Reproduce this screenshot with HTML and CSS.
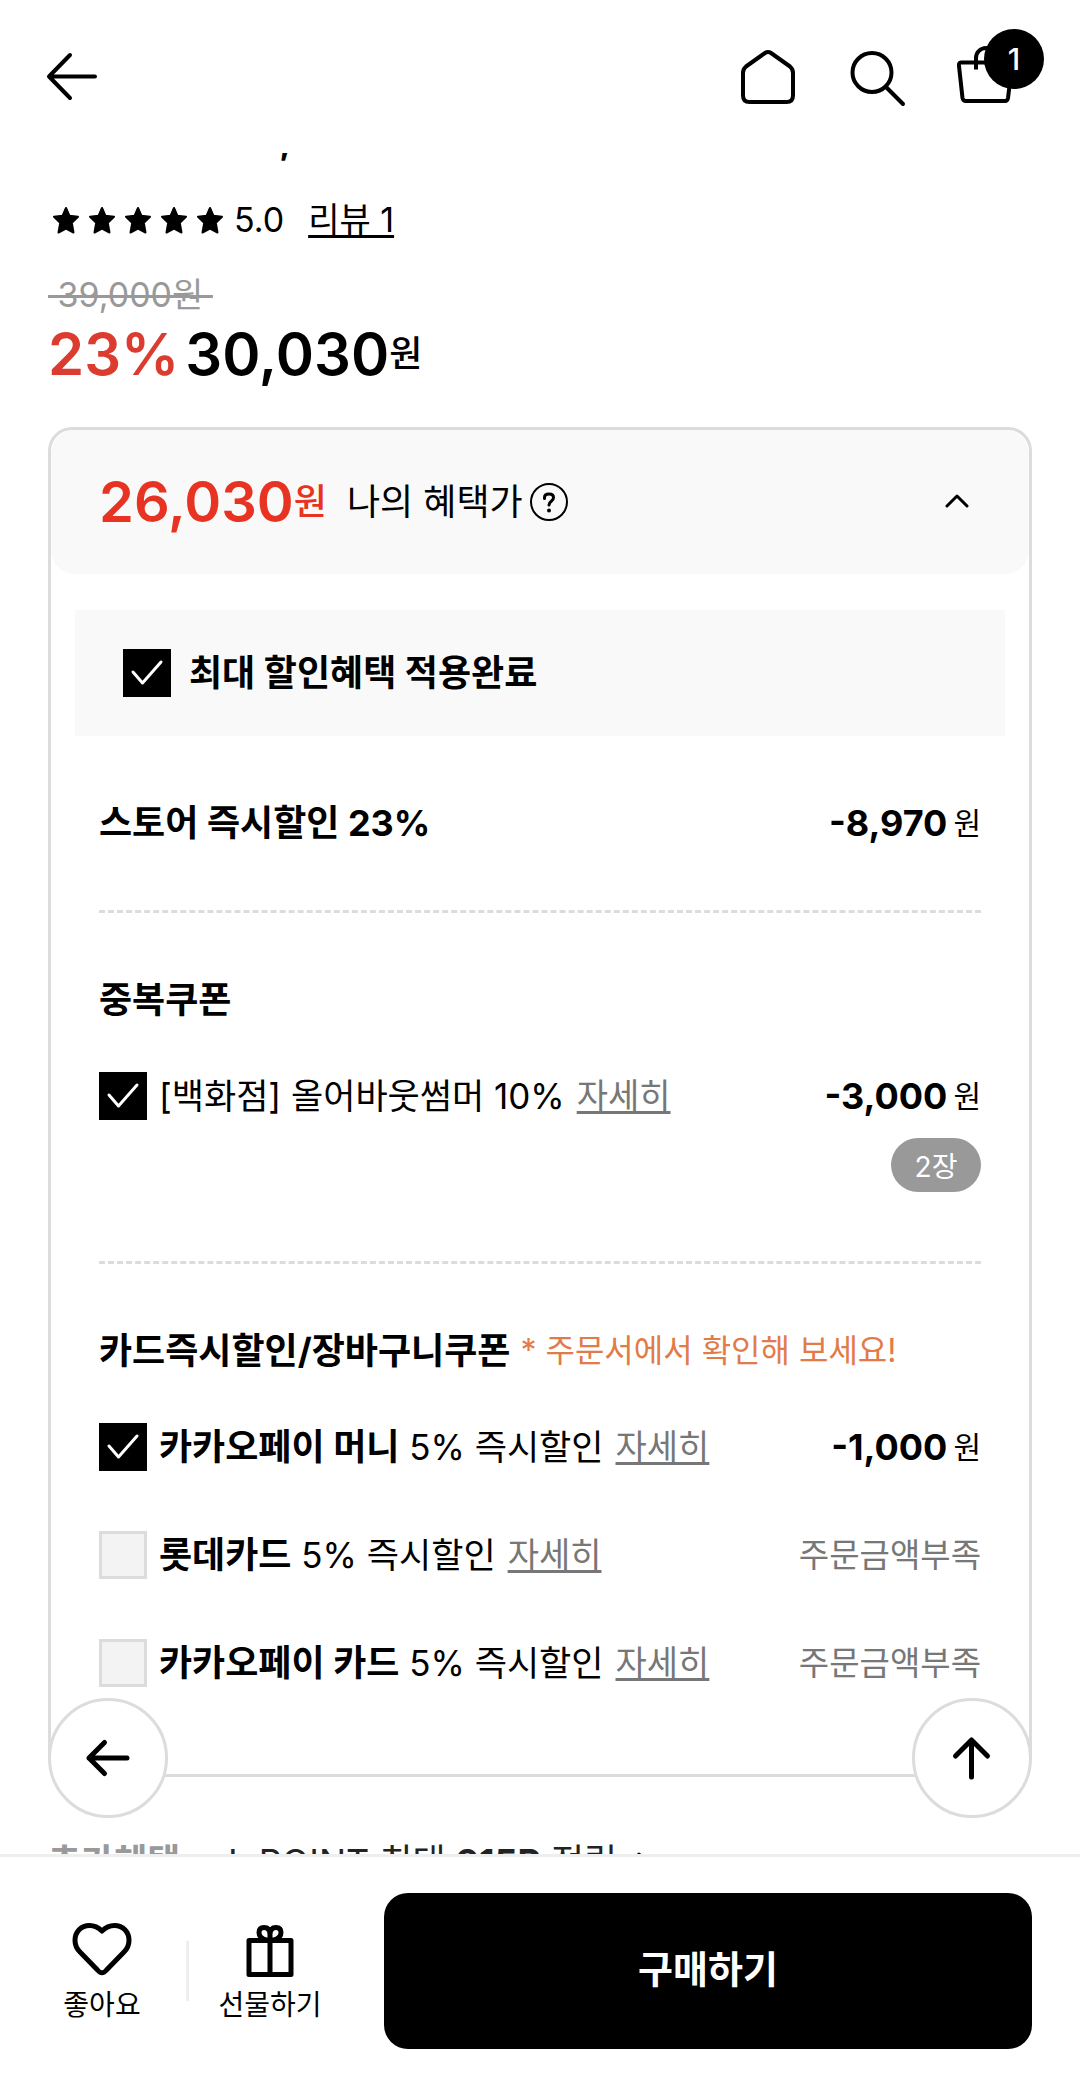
FILE: index.html
```html
<!DOCTYPE html>
<html lang="ko">
<head>
<meta charset="utf-8">
<meta name="viewport" content="width=device-width, initial-scale=1">
<title>상품 상세</title>
<link rel="stylesheet" href="styles.css">
</head>
<body>
<header class="topbar">
  <button class="icon-btn" type="button" aria-label="뒤로">
    <svg viewBox="0 0 64 64"><path d="M55 31.5H9M30 10 9 31.5 30 53"/></svg>
  </button>
  <nav class="topbar-nav">
    <a class="icon-btn" href="#" aria-label="홈">
      <svg viewBox="0 0 64 64"><path d="M29 8 10 21.500Q7 24 7 28V50.500Q7 57 13.500 57H50.500Q57 57 57 50.500V28Q57 24 54 21.500L35 8Q32 6 29 8Z"/></svg>
    </a>
    <a class="icon-btn" href="#" aria-label="검색">
      <svg viewBox="-2 0 64 64"><circle cx="26" cy="27.500" r="19.500"/><path d="M40 42 57 59"/></svg>
    </a>
    <a class="icon-btn" href="#" aria-label="장바구니">
      <svg viewBox="1 0 64 64"><path d="M10 17.500H58Q61.500 17.500 61 21L57 53Q56.500 56 54 56H15Q12 56 11.500 53L8 21Q7.500 17.500 10 17.500Z"/><path stroke-linecap="butt" d="M25 24.500V13A10 10 0 0 1 45 13V24.500"/></svg>
      <span class="cart-count">1</span>
    </a>
  </nav>
</header>

<main class="content">
  <p class="product-title">,</p>
  <div class="rating">
    <span class="stars" role="img" aria-label="별점 5점">
      <svg viewBox="0 0 36 36"><use href="#star"/></svg><svg viewBox="0 0 36 36"><use href="#star"/></svg><svg viewBox="0 0 36 36"><use href="#star"/></svg><svg viewBox="0 0 36 36"><use href="#star"/></svg><svg viewBox="0 0 36 36"><use href="#star"/></svg>
    </span>
    <span class="score">5.0</span>
    <a class="reviews" href="#">리뷰 1</a>
  </div>
  <del class="list-price">&nbsp;39,000원&nbsp;</del>
  <p class="sale-price"><span class="rate">23%</span><strong>30,030</strong><span class="won">원</span></p>

  <section class="benefit">
    <div class="benefit-head">
      <strong class="my-price">26,030</strong><span class="won my-won">원</span>
      <span class="my-label">나의 혜택가</span>
      <button class="help-btn" type="button" aria-label="혜택가 안내">
        <svg viewBox="0 0 40 40"><circle cx="20" cy="20" r="18"/><path stroke-width="3" d="M15.500 16.500V15.500Q15.500 12 20 12T24.500 15.500Q24.500 17.500 22.500 19T20 23"/><circle class="dot" cx="20" cy="28.500" r="2"/></svg>
      </button>
      <button class="fold-btn" type="button" aria-label="접기">
        <svg viewBox="0 0 24 24"><path d="M2 16 12 6 22 16"/></svg>
      </button>
    </div>

    <label class="max-benefit">
      <input class="check" type="checkbox" checked>
      <span class="strong">최대 할인혜택 적용완료</span>
    </label>

    <div class="group">
      <div class="row">
        <h2 class="group-title">스토어 즉시할인 23%</h2>
        <p class="amount"><strong>-8,970</strong>원</p>
      </div>
    </div>

    <div class="group group-stack">
      <h2 class="group-title">중복쿠폰</h2>
      <div class="row">
        <input class="check" type="checkbox" id="coupon" checked>
        <label class="name" for="coupon">[백화점] 올어바웃썸머 10%</label>
        <a class="detail" href="#">자세히</a>
        <p class="amount"><strong>-3,000</strong>원</p>
      </div>
      <button class="sheets" type="button">2장</button>
    </div>

    <div class="group group-cards">
      <div class="title-line">
        <h2 class="group-title">카드즉시할인/장바구니쿠폰</h2>
        <span class="notice">* 주문서에서 확인해 보세요!</span>
      </div>
      <div class="row">
        <input class="check" type="checkbox" id="money" checked>
        <label class="name" for="money"><b>카카오페이 머니</b> 5% 즉시할인</label>
        <a class="detail" href="#">자세히</a>
        <p class="amount"><strong>-1,000</strong>원</p>
      </div>
      <div class="row">
        <input class="check" type="checkbox" id="lotte" disabled>
        <label class="name" for="lotte"><b>롯데카드</b> 5% 즉시할인</label>
        <a class="detail" href="#">자세히</a>
        <span class="lack">주문금액부족</span>
      </div>
      <div class="row">
        <input class="check" type="checkbox" id="kakao" disabled>
        <label class="name" for="kakao"><b>카카오페이 카드</b> 5% 즉시할인</label>
        <a class="detail" href="#">자세히</a>
        <span class="lack">주문금액부족</span>
      </div>
    </div>
  </section>

  <div class="extra">
    <span class="extra-label">추가혜택</span>
    <span class="extra-text">L.POINT 최대 <b>315P</b> 적립</span>
    <svg viewBox="0 0 24 24"><path d="M6 10 12 4 18 10"/></svg>
  </div>

  <button class="float-btn float-back" type="button" aria-label="이전">
    <svg viewBox="0 0 64 64"><path d="M51 32H13M28.500 16.500 13 32 28.500 47.500"/></svg>
  </button>
  <button class="float-btn float-top" type="button" aria-label="맨 위로">
    <svg viewBox="0 0 64 64"><path d="M31.500 51V14M15.500 30 31.500 14 47.500 30"/></svg>
  </button>
</main>

<footer class="buybar">
  <button class="tool like" type="button">
    <svg viewBox="0 0 60 60"><path d="M30 10C26 6 22 4.500 17.500 4.500C9 4.500 3 11 3 19.500C3 24 5 28 8 31L25.500 49Q30 54.500 34.500 49L52 31C55 28 57 24 57 19.500C57 11 51 4.500 42.500 4.500C38 4.500 34 6 30 10Z"/></svg>
    <span>좋아요</span>
  </button>
  <span class="divider"></span>
  <button class="tool gift" type="button">
    <svg viewBox="0 0 60 60"><path d="M9 19.500H51V53.500H9ZM30 10V53.500M30 19H26Q19 17 19 11.500Q19 6.500 24 6.500Q30 6.500 30 13.500Q30 6.500 36 6.500Q41 6.500 41 11.500Q41 17 34 19Z"/></svg>
    <span>선물하기</span>
  </button>
  <button class="buy" type="button">구매하기</button>
</footer>

<svg class="defs" aria-hidden="true">
  <symbol id="star" viewBox="0 0 36 36"><path d="M18 6 21.500 13.800 30 14.800 23.800 20.800 25.500 30.500 18 26.600 10.500 30.500 12.200 20.800 6 14.800 14.500 13.800Z"/></symbol>
</svg>
</body>
</html>
```
FILE: styles.css
```css
* {
  box-sizing: border-box;
}

body {
  display: flex;
  flex-direction: column;
  height: 100vh;
  margin: 0;
  background: #fff;
  color: #000;
  font-family: Inter, "Noto Sans CJK KR", sans-serif;
  font-size: 35px;
  line-height: 48px;
}

p,
h2 {
  margin: 0;
}

button {
  padding: 0;
  border: 0;
  background: none;
  color: inherit;
  font-family: inherit;
}

svg {
  display: block;
  fill: none;
  stroke: #000;
  stroke-width: 4;
  stroke-linecap: round;
  stroke-linejoin: round;
}

.defs {
  position: absolute;
  width: 0;
  height: 0;
}

/* top bar */

.topbar {
  display: flex;
  flex: none;
  align-items: center;
  justify-content: space-between;
  height: 153px;
  padding: 0 64px 0 40px;
}

.topbar-nav {
  display: flex;
  gap: 44px;
}

.icon-btn {
  position: relative;
  width: 64px;
  height: 64px;
}

.cart-count {
  position: absolute;
  top: -16px;
  left: 32px;
  width: 60px;
  height: 60px;
  border-radius: 50%;
  background: #000;
  color: #fff;
  font-size: 30px;
  font-weight: 500;
  line-height: 60px;
  text-align: center;
}

.topbar a {
  text-decoration: none;
}

/* product summary */

.content {
  position: relative;
  flex: 1;
  min-height: 0;
  overflow: hidden;
  padding: 0 48px;
}

.product-title {
  display: flex;
  align-items: flex-end;
  height: 10px;
  padding-left: 231px;
  overflow: hidden;
  font-size: 40px;
  font-weight: 600;
}

.rating {
  display: flex;
  align-items: center;
  margin-top: 33px;
  font-size: 34px;
}

.stars {
  display: flex;
}

.stars svg {
  width: 36px;
  height: 36px;
  fill: #000;
  stroke-width: 2;
}

.score {
  margin-left: 6px;
}

.reviews {
  margin-left: 24px;
  color: #000;
}

.reviews,
.detail {
  text-decoration: underline;
  text-decoration-thickness: 3px;
  text-decoration-skip-ink: none;
  text-underline-offset: 3px;
}

.list-price {
  display: block;
  margin-top: 27px;
  color: #999;
  font-size: 34px;
  text-decoration-thickness: 3px;
}

.sale-price {
  display: flex;
  align-items: center;
  margin-top: 3px;
  font-size: 58px;
  line-height: 64px;
}

.sale-price strong,
.rate {
  font-weight: 600;
}

.rate {
  margin-right: 6px;
  color: #dc3b30;
}

.won {
  font-size: 36px;
  font-weight: 500;
}

/* benefit card */

.benefit {
  margin-top: 41px;
  border: 3px solid #dcdcdc;
  border-radius: 24px;
}

.benefit-head {
  display: flex;
  align-items: center;
  height: 144px;
  padding: 0 48px;
  border-radius: 24px;
  background: #f9f9f9;
}

.my-price {
  color: #e83323;
  font-size: 56px;
  font-weight: 600;
}

.my-won {
  color: #e83323;
}

.my-label {
  margin-left: 20px;
  font-size: 36px;
}

.help-btn {
  width: 40px;
  height: 40px;
  margin-left: 6px;
}

.help-btn svg {
  stroke-width: 2;
}

.help-btn .dot {
  fill: #000;
  stroke: none;
}

.fold-btn {
  width: 24px;
  height: 24px;
  margin: 0 12px 0 auto;
}

.fold-btn svg {
  stroke-width: 3;
}

.max-benefit {
  display: flex;
  align-items: center;
  gap: 18px;
  height: 126px;
  margin: 36px 24px 0;
  padding: 0 48px;
  background: #f9f9f9;
}

.strong,
.group-title,
.name b {
  font-size: 36px;
  font-weight: 700;
}

.check {
  flex: none;
  width: 48px;
  height: 48px;
  margin: 0;
  appearance: none;
  background: #000;
}

.check:checked {
  background: #000 url("data:image/svg+xml,%3Csvg xmlns='http://www.w3.org/2000/svg' viewBox='0 0 48 48'%3E%3Cpath d='M10 23 19.500 34 38 13' fill='none' stroke='white' stroke-width='3' stroke-linecap='round' stroke-linejoin='round'/%3E%3C/svg%3E");
}

.check:disabled {
  border: 3px solid #dcdcdc;
  background: #f3f3f3;
}

.group {
  display: flex;
  flex-direction: column;
  margin: 0 48px;
  padding: 63px 0;
}

.group + .group {
  border-top: 3px dashed #dcdcdc;
}

.group-stack {
  padding-bottom: 69px;
}

.group-stack .row {
  margin-top: 48px;
}

.group-cards {
  gap: 60px;
  padding-bottom: 87px;
}

.title-line {
  display: flex;
  gap: 10px;
  margin-bottom: -12px;
}

.notice {
  color: #e17c48;
  font-size: 32px;
}

.row {
  display: flex;
  align-items: center;
}

.name {
  margin-left: 12px;
}

.detail {
  margin-left: 12px;
  color: #777;
  font-size: 34px;
}

.amount {
  display: flex;
  gap: 6px;
  margin-left: auto;
  font-size: 30px;
}

.amount strong {
  font-size: 36px;
  font-weight: 700;
}

.lack {
  margin-left: auto;
  color: #777;
  font-size: 33px;
}

.sheets {
  align-self: flex-end;
  width: 90px;
  height: 54px;
  margin-top: 18px;
  border-radius: 27px;
  background: #999;
  color: #fff;
  font-size: 28px;
}

.extra {
  display: flex;
  align-items: center;
  margin-top: 61px;
  color: #222;
  font-size: 36px;
}

.extra-label {
  width: 180px;
  color: #999;
  font-weight: 700;
}

.extra svg {
  width: 24px;
  height: 24px;
  margin-left: 10px;
  stroke-width: 3;
}

/* floating buttons */

.float-btn {
  position: absolute;
  bottom: 36px;
  display: flex;
  align-items: center;
  justify-content: center;
  width: 120px;
  height: 120px;
  border: 3px solid #dcdcdc;
  border-radius: 50%;
  background: #fff;
}

.float-back {
  left: 48px;
}

.float-top {
  right: 48px;
}

.float-btn svg {
  width: 64px;
  height: 64px;
  stroke-width: 5;
}

/* bottom purchase bar */

.buybar {
  display: flex;
  flex: none;
  align-items: center;
  padding: 36px 48px;
  border-top: 3px solid #eee;
}

.tool {
  display: flex;
  flex: none;
  flex-direction: column;
  align-items: center;
  gap: 4px;
  width: 108px;
  padding-top: 4px;
  font-size: 28px;
  line-height: 40px;
  white-space: nowrap;
}

.tool svg {
  width: 60px;
  height: 60px;
  stroke-width: 5;
}

.divider {
  width: 3px;
  height: 60px;
  margin: 0 27px 0 30px;
  background: #eee;
}

.buy {
  flex: 1;
  height: 156px;
  margin-left: 60px;
  padding-bottom: 10px;
  border-radius: 24px;
  background: #000;
  color: #fff;
  font-size: 38px;
  font-weight: 700;
}
```
